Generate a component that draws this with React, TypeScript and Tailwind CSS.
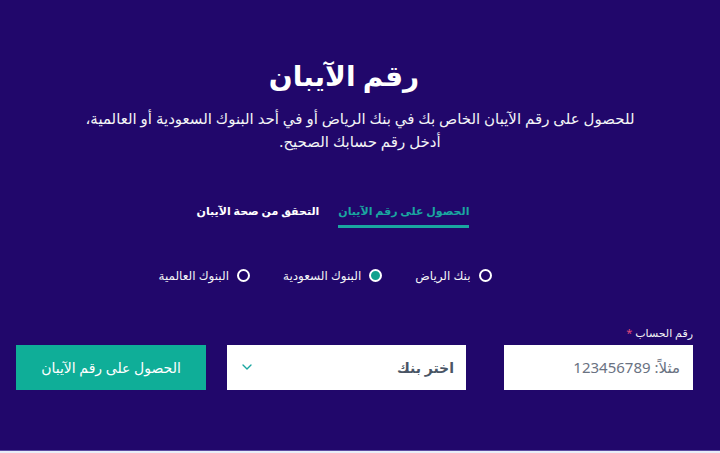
import { ChevronDown } from "lucide-react";
import { useState } from "react";

const font = { fontFamily: '"Noto Sans", "DejaVu Sans", sans-serif' };

const banks = ["بنك الرياض", "البنوك السعودية", "البنوك العالمية"];

const App = () => {
  const [selected, setSelected] = useState(1);
  const [tab, setTab] = useState(0);

  return (
    <div dir="rtl" style={font} className="w-[720px] h-[453px] bg-[#21076b] text-white flex flex-col">
      <div className="flex-1 flex flex-col items-center">
        {/* العنوان */}
        <h1 className="mt-[55px] mr-[32px] text-[28px] leading-[40px] font-bold">رقم الآيبان</h1>
        <p className="mt-[12px] text-[15px] leading-[23px] text-center text-gray-100">
          للحصول على رقم الآيبان الخاص بك في بنك الرياض أو في أحد البنوك السعودية أو العالمية،
          <br />
          أدخل رقم حسابك الصحيح.
        </p>

        {/* التبويبات */}
        <div className="mt-[50px] mr-[54px] flex gap-[19px] text-[11px] font-bold">
          <button
            onClick={() => setTab(0)}
            className={`pb-[5px] border-b-[3px] ${tab === 0 ? "text-[#1aa6a0] border-[#1aa6a0]" : "text-white border-transparent"}`}
          >
            الحصول على رقم الآيبان
          </button>
          <button
            onClick={() => setTab(1)}
            className={`pb-[5px] border-b-[3px] ${tab === 1 ? "text-[#1aa6a0] border-[#1aa6a0]" : "text-white border-transparent"}`}
          >
            التحقق من صحة الآيبان
          </button>
        </div>

        {/* خيارات البنوك */}
        <div className="mt-[39px] mr-[70px] flex gap-[33px] text-[12px] text-gray-100">
          {banks.map((b, i) => (
            <label key={b} onClick={() => setSelected(i)} className="flex items-center gap-[8px] cursor-pointer">
              <span
                className={`w-[13px] h-[13px] rounded-full border-2 border-white ${selected === i ? "bg-[#14a28e]" : ""}`}
              />
              <span>{b}</span>
            </label>
          ))}
        </div>

        {/* النموذج */}
        <div className="mt-[40px] w-full pr-[27px] pl-[16px] flex items-end">
          <div className="w-[189px] flex flex-col">
            <span className="text-[11px] leading-[16px] mb-[4px] text-gray-100">
              رقم الحساب <span className="text-[#e0497a]">*</span>
            </span>
            <input
              placeholder="مثلاً: 123456789"
              className="h-[45px] bg-white px-[13px] text-[15px] text-gray-700 placeholder:text-gray-500 outline-none"
            />
          </div>
          <div className="mr-[38px] w-[239px] h-[45px] bg-white flex items-center justify-between px-[12px]">
            <span className="text-[14px] font-bold text-gray-600">اختر بنك</span>
            <ChevronDown className="w-[16px] h-[16px] text-[#1aa6a0]" strokeWidth={2} />
          </div>
          <button className="mr-[21px] w-[190px] h-[45px] bg-[#0fae98] text-white text-[14px]">
            الحصول على رقم الآيبان
          </button>
        </div>
      </div>
      <div className="h-[1px] bg-[#5a4aa0]" />
      <div className="h-[2px] bg-[#e8eef8]" />
    </div>
  );
};

export default App;
